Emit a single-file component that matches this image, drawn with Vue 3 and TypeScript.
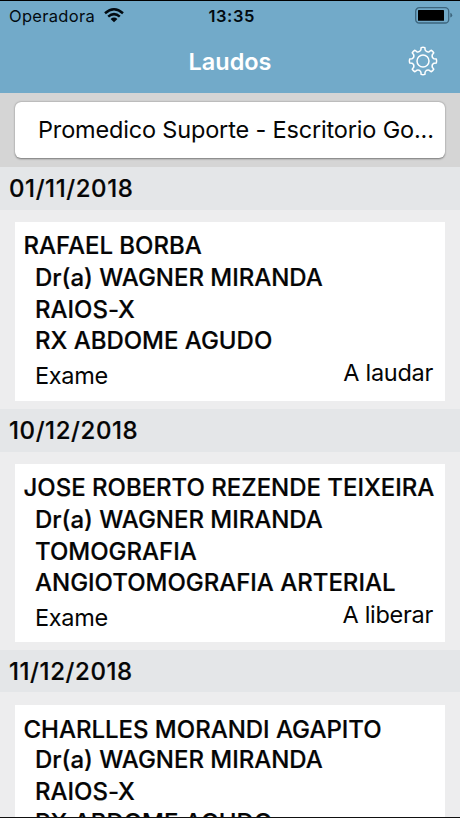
<script setup lang="ts">
interface Report {
  id: string
  date: string
  patient: string
  doctor: string
  modality: string
  exam: string
  kind: string
  status: string
}

const unit = 'Promedico Suporte - Escritorio Go...'

const reports: Report[] = [
  { id: 'first', date: '01/11/2018', patient: 'RAFAEL BORBA', doctor: 'Dr(a) WAGNER MIRANDA', modality: 'RAIOS-X', exam: 'RX ABDOME AGUDO', kind: 'Exame', status: 'A laudar' },
  { id: 'second', date: '10/12/2018', patient: 'JOSE ROBERTO REZENDE TEIXEIRA', doctor: 'Dr(a) WAGNER MIRANDA', modality: 'TOMOGRAFIA', exam: 'ANGIOTOMOGRAFIA ARTERIAL', kind: 'Exame', status: 'A liberar' },
  { id: 'third', date: '11/12/2018', patient: 'CHARLLES MORANDI AGAPITO', doctor: 'Dr(a) WAGNER MIRANDA', modality: 'RAIOS-X', exam: 'RX ABDOME AGUDO', kind: '', status: '' },
]

// Outline of the eight-toothed settings gear, centred on the origin
const gearPath = Array.from({ length: 8 }, (_, i) => {
  const at = (deg: number, r: number): string => {
    const a = ((i * 45 + deg - 90) * Math.PI) / 180
    return `${(r * Math.cos(a)).toFixed(2)} ${(r * Math.sin(a)).toFixed(2)}`
  }
  return `${i === 0 ? 'M' : 'L'}${at(-8, 13.5)} Q${at(0, 13.9)} ${at(8, 13.5)} L${at(11, 11.2)} Q${at(22.5, 9.2)} ${at(34, 11.2)}`
}).join(' ') + ' Z'
</script>

<template>
  <div class="screen">
    <header class="header">
      <div class="statusbar">
        <div class="carrier">
          <span>Operadora</span>
          <svg class="wifi" width="20" height="15" viewBox="0 0 20 15">
            <g fill="none" stroke="#020a10" stroke-width="2.5">
              <path d="M1 5.2Q10-2.6 19 5.2" />
              <path d="M4.2 8.6Q10 3.6 15.8 8.6" />
            </g>
            <path d="M6.6 11Q10 8.2 13.4 11L10 14.2Z" fill="#020a10" />
          </svg>
        </div>
        <span class="clock">13:35</span>
        <svg class="battery" width="38" height="17" viewBox="0 0 38 17">
          <rect x="0.7" y="0.7" width="33" height="15.3" rx="3.6" fill="none" stroke="#3d657d" stroke-width="1.3" />
          <rect x="3" y="3" width="26" height="10.8" rx="0.6" fill="#000" />
          <path d="M35.3 5.8Q37.2 6.5 37.2 8.2Q37.2 9.9 35.3 10.6Z" fill="#3d657d" />
        </svg>
      </div>
      <div class="navbar">
        <h1 class="title">Laudos</h1>
        <svg class="gear" width="30" height="30" viewBox="-15 -15 30 30">
          <g fill="none" stroke="#fff" stroke-width="1.5" stroke-linejoin="round">
            <path :d="gearPath" />
            <circle r="6" />
          </g>
        </svg>
      </div>
    </header>

    <div class="filter">
      <div class="select"><span class="unit">{{ unit }}</span></div>
    </div>

    <section v-for="report in reports" :key="report.id" class="group" :class="report.id">
      <h2 class="date"><span>{{ report.date }}</span></h2>
      <article class="card">
        <div class="line patient">{{ report.patient }}</div>
        <div class="line doctor">{{ report.doctor }}</div>
        <div class="line modality">{{ report.modality }}</div>
        <div class="line exam">{{ report.exam }}</div>
        <div v-if="report.kind" class="footer">
          <span class="kind">{{ report.kind }}</span>
          <span class="status">{{ report.status }}</span>
        </div>
      </article>
    </section>
  </div>
</template>

<style>
body {
  margin: 0;
  overflow: hidden;
}
</style>

<style scoped>
.screen {
  box-sizing: border-box;
  width: 460px;
  height: 818px;
  overflow: hidden;
  border-top: 1px solid #000;
  border-bottom: 1px solid #111;
  background: #ededee;
  color: #050505;
  font-family: Inter, "Liberation Sans", sans-serif;
  font-size: 23.5px;
}

.header {
  height: 92px;
  background: #72aac9;
}

.statusbar {
  display: grid;
  grid-template-columns: 1fr auto 1fr;
  align-items: center;
  height: 29px;
  padding: 0 7px 0 9px;
  color: #020a10;
}

.carrier {
  display: flex;
  align-items: center;
  gap: 9px;
  font-size: 16.5px;
  letter-spacing: 0.3px;
}

.clock {
  padding-left: 1.5px;
  font-size: 16.5px;
  font-weight: 600;
  letter-spacing: 0.6px;
}

.battery {
  justify-self: end;
}

.navbar {
  display: grid;
  grid-template-columns: 1fr auto 1fr;
  align-items: center;
  height: 62px;
  padding: 0 22.5px;
}

.title {
  grid-column: 2;
  margin: 0;
  padding-top: 1px;
  color: #fff;
  font-size: 23.5px;
  font-weight: 600;
  line-height: 32px;
}

.gear {
  justify-self: end;
}

.filter {
  box-sizing: border-box;
  height: 74px;
  padding: 9px 15px 0;
  background: #d5d5d5;
}

.select {
  box-sizing: border-box;
  height: 56px;
  padding: 0 10px 0 23px;
  border-radius: 6px;
  background: #fff;
  box-shadow: 0 0.5px 2px rgba(0, 0, 0, 0.45);
  line-height: 56px;
  letter-spacing: -0.17px;
  white-space: nowrap;
}

.group {
  display: flow-root;
}

.first {
  height: 242px;
}

.second {
  height: 240.5px;
}

.date {
  height: 42.5px;
  margin: 0 0 12.5px;
  padding-left: 9px;
  background: #e4e6e8;
  font-size: 24px;
  font-weight: 500;
  line-height: 43px;
  letter-spacing: 0.6px;
}

.date span {
  -webkit-text-stroke: 0.2px currentColor;
}

.card {
  box-sizing: border-box;
  height: 178.5px;
  margin: 0 15px;
  padding: 8.4px 12px 0 8.5px;
  background: #fff;
  white-space: nowrap;
}

.second .card {
  height: 178px;
}

.line {
  height: 31.6px;
  padding-left: 11.5px;
  font-size: 24px;
  font-weight: 500;
  line-height: 32px;
  letter-spacing: -0.02px;
  -webkit-text-stroke: 0.2px currentColor;
}

.patient {
  padding-left: 0;
}

.third .patient {
  height: 31.4px;
  line-height: 33px;
}

.footer {
  display: flex;
  justify-content: space-between;
  padding-left: 11.5px;
  line-height: 32px;
  letter-spacing: -0.3px;
}

.kind {
  padding-top: 3px;
}
</style>
